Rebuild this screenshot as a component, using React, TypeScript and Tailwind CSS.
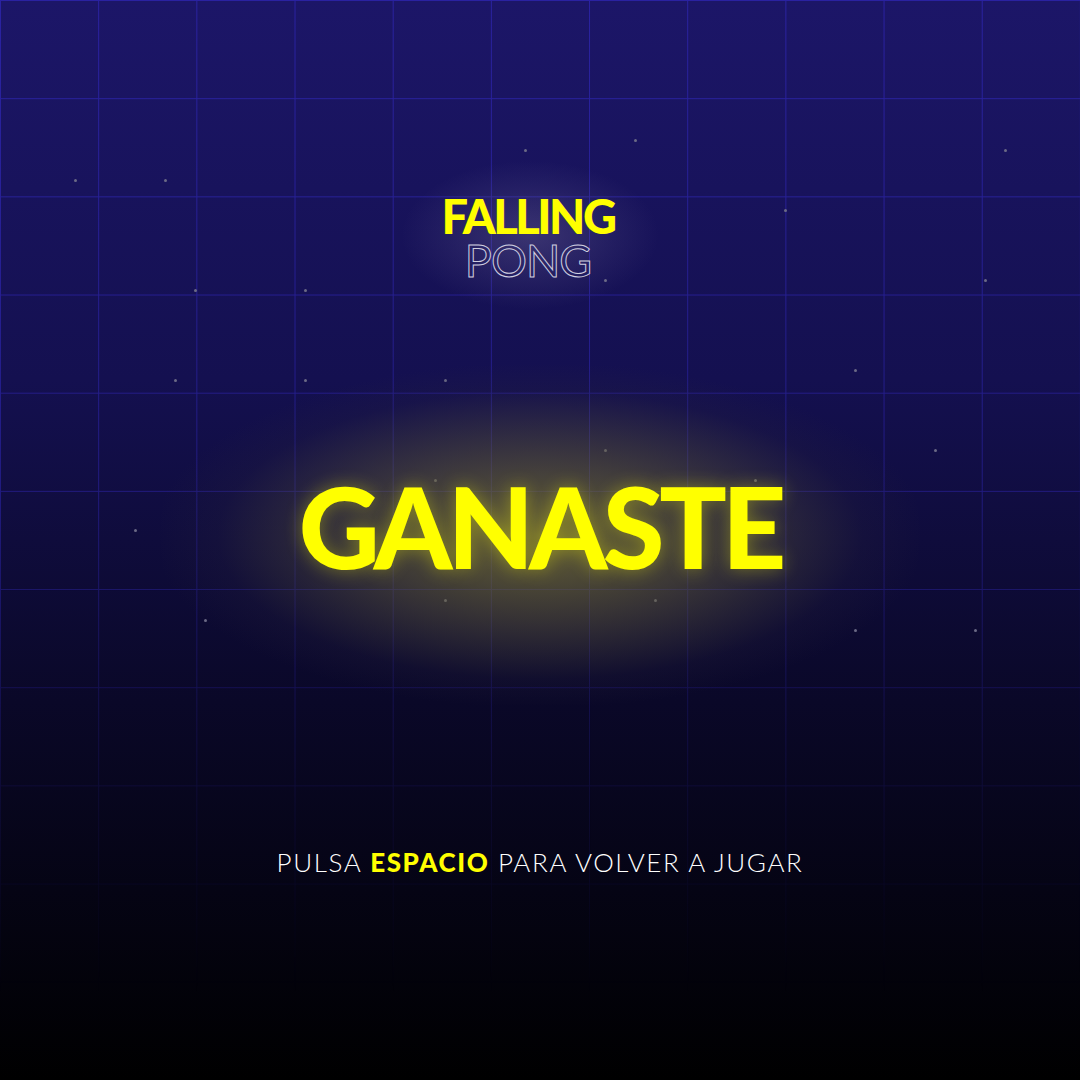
const stars = [
  [75, 180], [165, 180], [195, 290], [305, 290], [525, 150], [635, 140],
  [785, 210], [1005, 150], [985, 280], [605, 280], [175, 380], [305, 380],
  [445, 380], [855, 370], [605, 450], [935, 450], [435, 480], [755, 480],
  [135, 530], [445, 600], [655, 600], [205, 620], [855, 630], [975, 630],
];

export default function App() {
  return (
    <div className="relative w-[1080px] h-[1080px] overflow-hidden bg-[linear-gradient(to_bottom,#1c1668_0%,#141050_35%,#0a0828_65%,#000000_100%)] font-['Lato',sans-serif]">
      {/* grid */}
      <div className="absolute inset-0 bg-[linear-gradient(to_right,#2c24a8_1px,transparent_1px),linear-gradient(to_bottom,#2c24a8_1px,transparent_1px)] bg-[size:98.18px_98.18px] [mask-image:linear-gradient(to_bottom,rgba(0,0,0,0.9)_0%,rgba(0,0,0,0.6)_45%,rgba(0,0,0,0.15)_75%,transparent_92%)]" />

      {/* stars */}
      {stars.map(([x, y], i) => (
        <span
          key={i}
          className="absolute w-[3px] h-[3px] rounded-full bg-[#6b6a86]"
          style={{ left: x - 1, top: y - 1 }}
        />
      ))}

      {/* glows */}
      <div className="absolute left-[400px] top-[160px] w-[260px] h-[150px] rounded-full bg-[radial-gradient(ellipse_at_center,rgba(140,130,170,0.3)_0%,rgba(140,130,170,0.1)_45%,transparent_70%)]" />
      <div className="absolute left-[160px] top-[365px] w-[760px] h-[340px] rounded-full bg-[radial-gradient(ellipse_at_center,rgba(125,120,50,0.8)_0%,rgba(95,90,55,0.5)_35%,rgba(45,40,60,0.18)_60%,transparent_72%)]" />

      <div className="relative flex flex-col items-center">
        <div className="mt-[194px] mr-[24px] flex flex-col items-center leading-[0.95]">
          <div className="text-[47px] font-black text-[#ffff00] tracking-[-2.5px]">FALLING</div>
          <div className="text-[45px] font-normal tracking-[-1px] text-transparent [-webkit-text-stroke:1px_#d0cfe0]">PONG</div>
        </div>

        <h1 className="mt-[189px] text-[112px] font-black leading-none tracking-[-5px] text-[#ffff00] [text-shadow:0_0_18px_rgba(255,255,0,0.35)]">
          GANASTE
        </h1>

        <p className="mt-[261px] text-[26px] font-light tracking-[1.6px] text-white">
          PULSA <span className="font-black text-[#ffff00]">ESPACIO</span> PARA VOLVER A JUGAR
        </p>
      </div>
    </div>
  );
}
